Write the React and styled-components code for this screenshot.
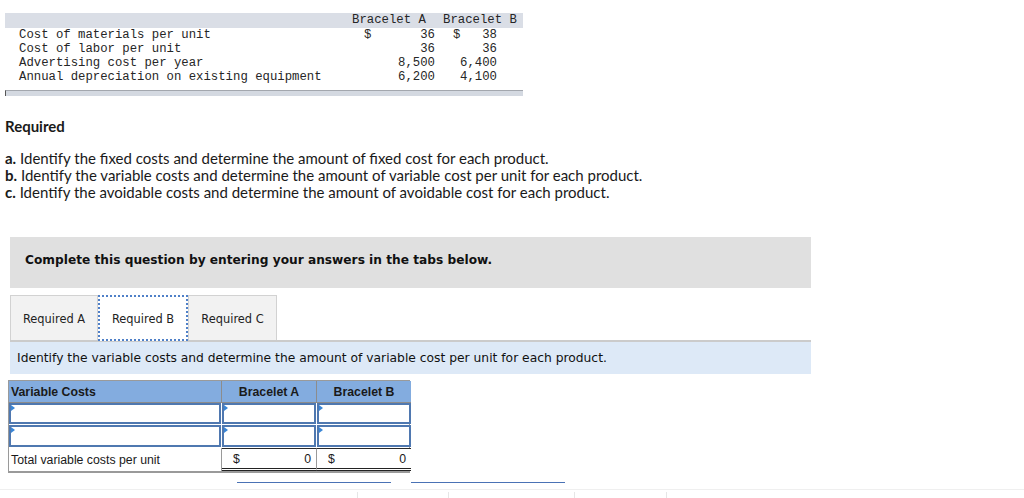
import styled, { createGlobalStyle } from "styled-components";

const GlobalStyle = createGlobalStyle`
  body {
    margin: 0;
    background: #fff;
  }
`;

const Page = styled.div`
  width: 1024px;
  height: 498px;
  overflow: hidden;
  color: #222;
`;

/* ---------- given data table ---------- */

const DataTable = styled.div`
  margin: 13px 0 0 5px;
  width: 518px;
  font-family: "Liberation Mono", "Courier New", monospace;
  font-size: 12.3px;
  color: #262626;
`;

const DataRow = styled.div`
  display: grid;
  grid-template-columns: 342px 93px 83px;
  height: ${(p) => (p.$head ? 15 : 14)}px;
  line-height: ${(p) => (p.$head ? 15 : 14)}px;
  background: ${(p) => (p.$head ? "#dadee6" : "#fff")};
  white-space: pre;
`;

const LabelCell = styled.div`
  padding-left: 14px;
`;

const HeadCell = styled.div`
  padding-left: ${(p) => p.$padL}px;
`;

const ValueCell = styled.div`
  display: flex;
  justify-content: space-between;
  padding-left: ${(p) => p.$padL}px;
  padding-right: ${(p) => p.$padR}px;
`;

const TableFoot = styled.div`
  margin-top: 6px;
  height: 5px;
  background: #d4d9e1;
  border-top: 1px solid #a3a7ae;
  border-left: 1px solid #555;
`;

/* ---------- requirements ---------- */

const Required = styled.div`
  margin: 22px 0 0 5px;
  font-family: Lato, "Liberation Sans", sans-serif;
  color: #1a1a1a;
`;

const RequiredTitle = styled.div`
  font-weight: 700;
  font-size: 15px;
  line-height: 17px;
`;

const Items = styled.div`
  margin-top: 15px;
  font-size: 15px;
  line-height: 17px;

  b {
    font-weight: 700;
  }
`;

/* ---------- question area ---------- */

const QuestionBox = styled.div`
  box-sizing: border-box;
  margin: 36px 0 0 10px;
  width: 801px;
  height: 51px;
  padding: 16px 0 0 15px;
  background: #e0e0e0;
  font-family: "DejaVu Sans", Verdana, sans-serif;
  font-weight: 700;
  font-size: 12.2px;
  line-height: 14px;
  color: #111;
`;

const Tabs = styled.div`
  display: flex;
  margin: 7px 0 0 10px;
  height: 45px;
`;

const Tab = styled.div`
  box-sizing: border-box;
  width: ${(p) => p.$w}px;
  display: flex;
  align-items: center;
  justify-content: center;
  padding-top: 1px;
  font-family: "DejaVu Sans", Verdana, sans-serif;
  font-size: 11.4px;
  color: #222;
  background: ${(p) => (p.$active ? "#fff" : "#f2f2f2")};
  border: ${(p) => (p.$active ? "2px dotted #4f80c8" : "1px solid #d2d2d2")};
  border-bottom: ${(p) => (p.$active ? "2px dotted #4f80c8" : "none")};
  margin-bottom: ${(p) => (p.$active ? "-1px" : "0")};
  position: relative;
  z-index: ${(p) => (p.$active ? 1 : 0)};
`;

const Prompt = styled.div`
  box-sizing: border-box;
  margin-left: 10px;
  width: 801px;
  height: 34px;
  padding: 9px 0 0 7px;
  border-top: 2px solid #cbcbcb;
  background: #dde9f7;
  font-family: "DejaVu Sans", Verdana, sans-serif;
  font-size: 12.3px;
  line-height: 14px;
  color: #111;
`;

/* ---------- answer table ---------- */

const AnswerTable = styled.div`
  margin: 6px 0 0 8px;
  width: 402px;
  display: grid;
  grid-template-columns: 213px 95px 94px;
  grid-template-rows: 22px 22px 23px 23px;
  border: 1px solid #9a9a9a;
  border-bottom-width: 2px;
  box-sizing: border-box;
  font-family: "Liberation Sans", Arial, sans-serif;
  font-size: 12.3px;
  color: #1a1a1a;
`;

const HeaderCell = styled.div`
  display: flex;
  align-items: center;
  justify-content: ${(p) => (p.$left ? "flex-start" : "center")};
  padding-left: ${(p) => (p.$left ? "2px" : "0")};
  background: #83acdf;
  font-weight: 700;
  border-right: ${(p) => (p.$last ? "none" : "1px solid #8c8c8c")};
  border-bottom: 1px solid #8c8c8c;
`;

const InputCell = styled.div`
  position: relative;
  box-sizing: border-box;
  background: #fff;
  border: 2px solid #4f78b0;
  margin: 0 ${(p) => (p.$last ? 0 : 1)}px 1px 0;

  &::before {
    content: "";
    position: absolute;
    top: 0;
    left: 0;
    border-top: 3px solid transparent;
    border-bottom: 3px solid transparent;
    border-left: 4px solid #3a86d6;
  }
`;

const TotalLabel = styled.div`
  display: flex;
  align-items: center;
  padding-left: 2px;
  border-right: 1px solid #9a9a9a;
  background: #fff;
`;

const TotalCell = styled.div`
  box-sizing: border-box;
  display: flex;
  align-items: center;
  justify-content: space-between;
  padding: 0 5px 0 11px;
  border-top: 1px solid #2a2a2a;
  border-bottom: 3px double #222;
  border-right: ${(p) => (p.$last ? "none" : "1px solid #9a9a9a")};
  background: #fff;
`;

const Underlines = styled.div`
  display: flex;
  gap: 20px;
  margin: 9px 0 0 237px;
`;

const Underline = styled.div`
  width: 154px;
  height: 1px;
  background: #4a72b5;
`;

const Footer = styled.div`
  display: flex;
  margin-top: 6px;
  height: 12px;
  border-top: 1px solid #efefef;
  padding-left: 357px;
`;

const FooterCell = styled.div`
  width: ${(p) => p.$w}px;
  margin-top: 2px;
  border-left: 1px solid #e6e6e6;
`;

const rows = [
  ["Cost of materials per unit", "$", "36", "$", "38"],
  ["Cost of labor per unit", "", "36", "", "36"],
  ["Advertising cost per year", "", "8,500", "", "6,400"],
  ["Annual depreciation on existing equipment", "", "6,200", "", "4,100"],
];

const items = [
  ["a.", "Identify the fixed costs and determine the amount of fixed cost for each product."],
  ["b.", "Identify the variable costs and determine the amount of variable cost per unit for each product."],
  ["c.", "Identify the avoidable costs and determine the amount of avoidable cost for each product."],
];

const App = () => {
  return (
    <Page>
      <GlobalStyle />
      <DataTable>
        <DataRow $head>
          <LabelCell />
          <HeadCell $padL={5}>Bracelet A</HeadCell>
          <HeadCell $padL={3}>Bracelet B</HeadCell>
        </DataRow>
        {rows.map((r) => (
          <DataRow key={r[0]}>
            <LabelCell>{r[0]}</LabelCell>
            <ValueCell $padL={17} $padR={5}>
              <span>{r[1]}</span>
              <span>{r[2]}</span>
            </ValueCell>
            <ValueCell $padL={13} $padR={26}>
              <span>{r[3]}</span>
              <span>{r[4]}</span>
            </ValueCell>
          </DataRow>
        ))}
        <TableFoot />
      </DataTable>

      <Required>
        <RequiredTitle>Required</RequiredTitle>
        <Items>
          {items.map((it) => (
            <div key={it[0]}>
              <b>{it[0]}</b> {it[1]}
            </div>
          ))}
        </Items>
      </Required>

      <QuestionBox>Complete this question by entering your answers in the tabs below.</QuestionBox>

      <Tabs>
        <Tab $w={88}>Required A</Tab>
        <Tab $w={90} $active>Required B</Tab>
        <Tab $w={89}>Required C</Tab>
      </Tabs>
      <Prompt>Identify the variable costs and determine the amount of variable cost per unit for each product.</Prompt>

      <AnswerTable>
        <HeaderCell $left>Variable Costs</HeaderCell>
        <HeaderCell>Bracelet A</HeaderCell>
        <HeaderCell $last>Bracelet B</HeaderCell>
        <InputCell />
        <InputCell />
        <InputCell $last />
        <InputCell />
        <InputCell />
        <InputCell $last />
        <TotalLabel>Total variable costs per unit</TotalLabel>
        <TotalCell>
          <span>$</span>
          <span>0</span>
        </TotalCell>
        <TotalCell $last>
          <span>$</span>
          <span>0</span>
        </TotalCell>
      </AnswerTable>

      <Underlines>
        <Underline />
        <Underline />
      </Underlines>
      <Footer>
        <FooterCell $w={90} />
        <FooterCell $w={125} />
        <FooterCell $w={91} />
        <FooterCell $w={1} />
      </Footer>
    </Page>
  );
};

export default App;
